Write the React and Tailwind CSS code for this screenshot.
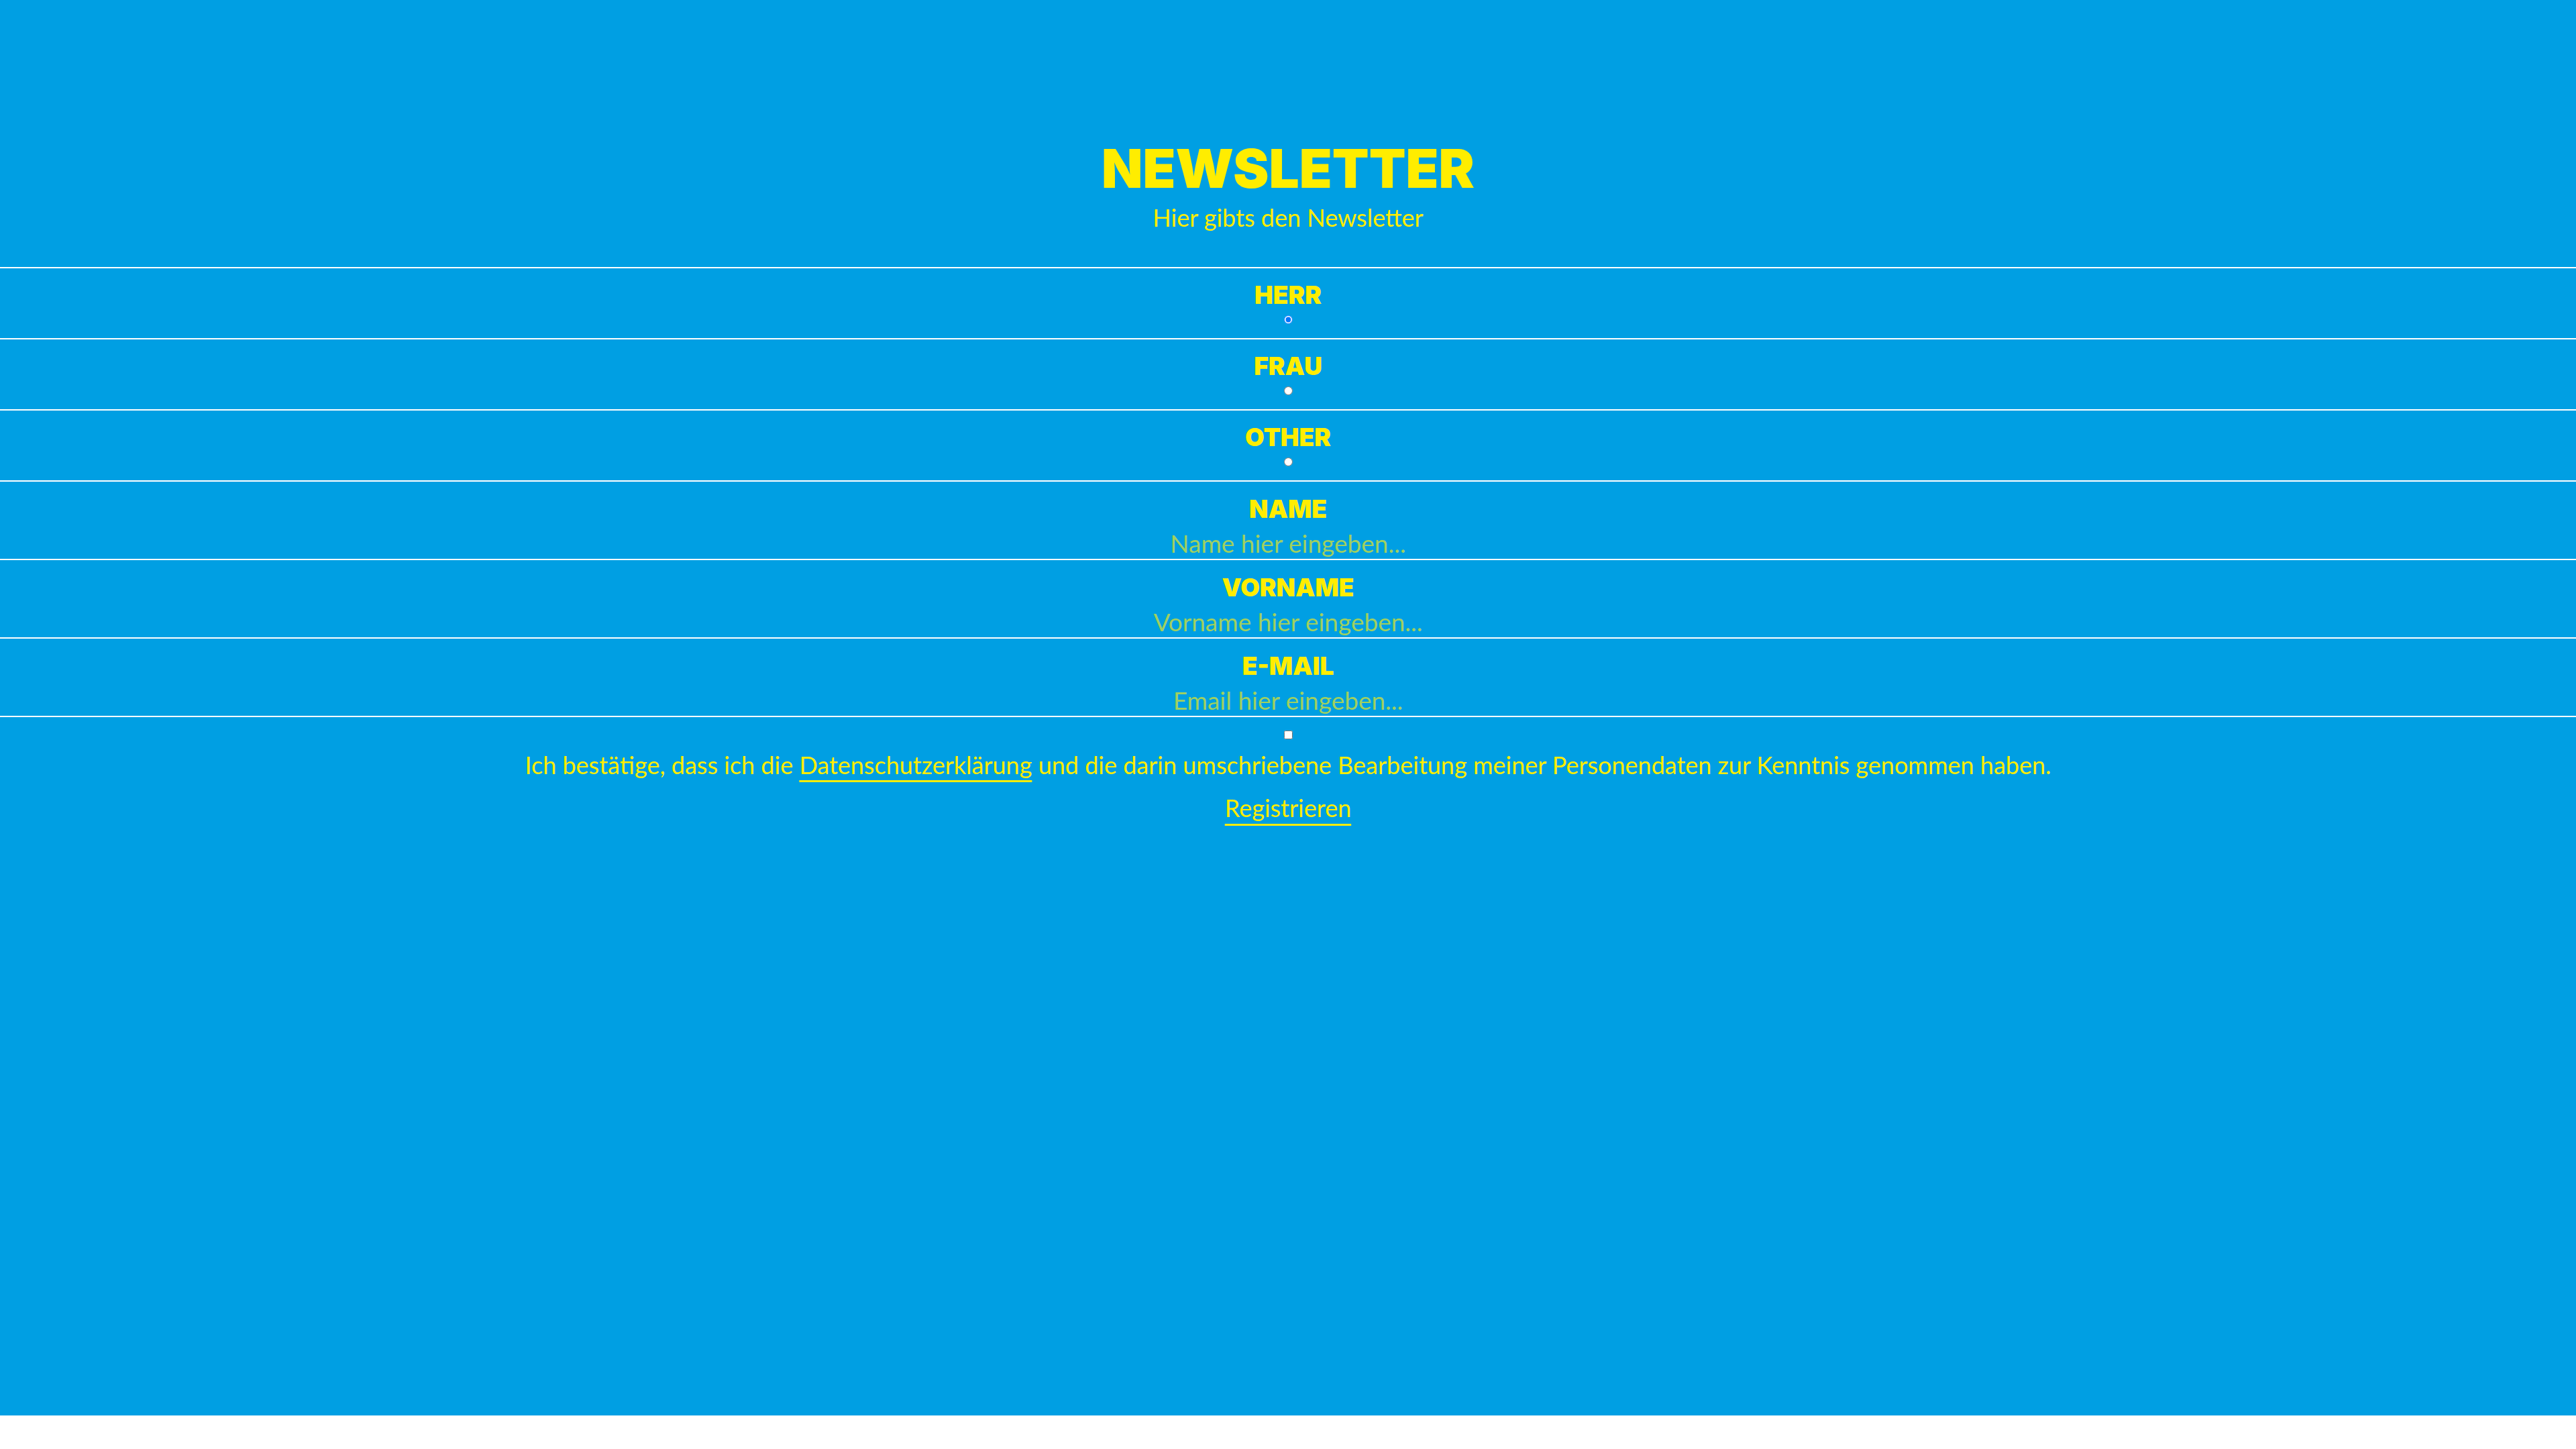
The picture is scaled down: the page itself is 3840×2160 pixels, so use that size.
export default function App() {
  const radios = [
    { label: "HERR", checked: true },
    { label: "FRAU", checked: false },
    { label: "OTHER", checked: false },
  ];
  const fields = [
    { label: "NAME", ph: "Name hier eingeben..." },
    { label: "VORNAME", ph: "Vorname hier eingeben..." },
    { label: "E-MAIL", ph: "Email hier eingeben..." },
  ];
  return (
    <div className="w-full h-[2110px] bg-[#009fe3] text-[#ffed00] font-['Lato','Liberation_Sans',sans-serif] flex flex-col">
      <div className="flex flex-col items-center pt-[211px]">
        <h1 className="text-[80px] leading-[80px] font-black m-0 font-['Inter','Lato',sans-serif]">NEWSLETTER</h1>
        <p className="text-[36px] leading-[36px] mt-[15px]">Hier gibts den Newsletter</p>
      </div>
      <form className="mt-[56px] flex flex-col" onSubmit={(e) => e.preventDefault()}>
        {radios.map((r) => (
          <label
            key={r.label}
            className="h-[106px] border-t-2 border-white flex flex-col items-center pt-[21px]"
          >
            <span className="text-[37px] leading-[37px] font-black font-['Inter','Lato',sans-serif]">{r.label}</span>
            <input
              type="radio"
              name="anrede"
              defaultChecked={r.checked}
              className="m-0 mt-[12px] w-[13px] h-[13px]"
            />
          </label>
        ))}
        {fields.map((f, i) => (
          <label
            key={f.label}
            className={
              "border-t-2 border-white flex flex-col items-center pt-[22px]" +
              (i === 2 ? " h-[119px] border-b-2" : " h-[117px]")
            }
          >
            <span className="text-[37px] leading-[37px] font-black font-['Inter','Lato',sans-serif]">{f.label}</span>
            <input
              type="text"
              placeholder={f.ph}
              className="mt-[11px] w-full h-[44px] bg-transparent border-0 outline-none text-center text-[37px] leading-[44px] text-[#ffed00] placeholder:text-[#9fd060] p-0"
            />
          </label>
        ))}
        <div className="flex flex-col items-center pt-[20px]">
          <input type="checkbox" className="m-0 w-[13px] h-[13px]" />
          <p className="text-[36px] leading-[36px] mt-[20px]">
            Ich bestätige, dass ich die{" "}
            <a href="#" className="underline decoration-[3px] underline-offset-[9px]">
              Datenschutzerklärung
            </a>{" "}
            und die darin umschriebene Bearbeitung meiner Personendaten zur Kenntnis genommen haben.
          </p>
          <button
            type="submit"
            className="mt-[28px] text-[36px] leading-[36px] underline decoration-[3px] underline-offset-[10px] bg-transparent p-0 cursor-pointer"
          >
            Registrieren
          </button>
        </div>
      </form>
    </div>
  );
}
